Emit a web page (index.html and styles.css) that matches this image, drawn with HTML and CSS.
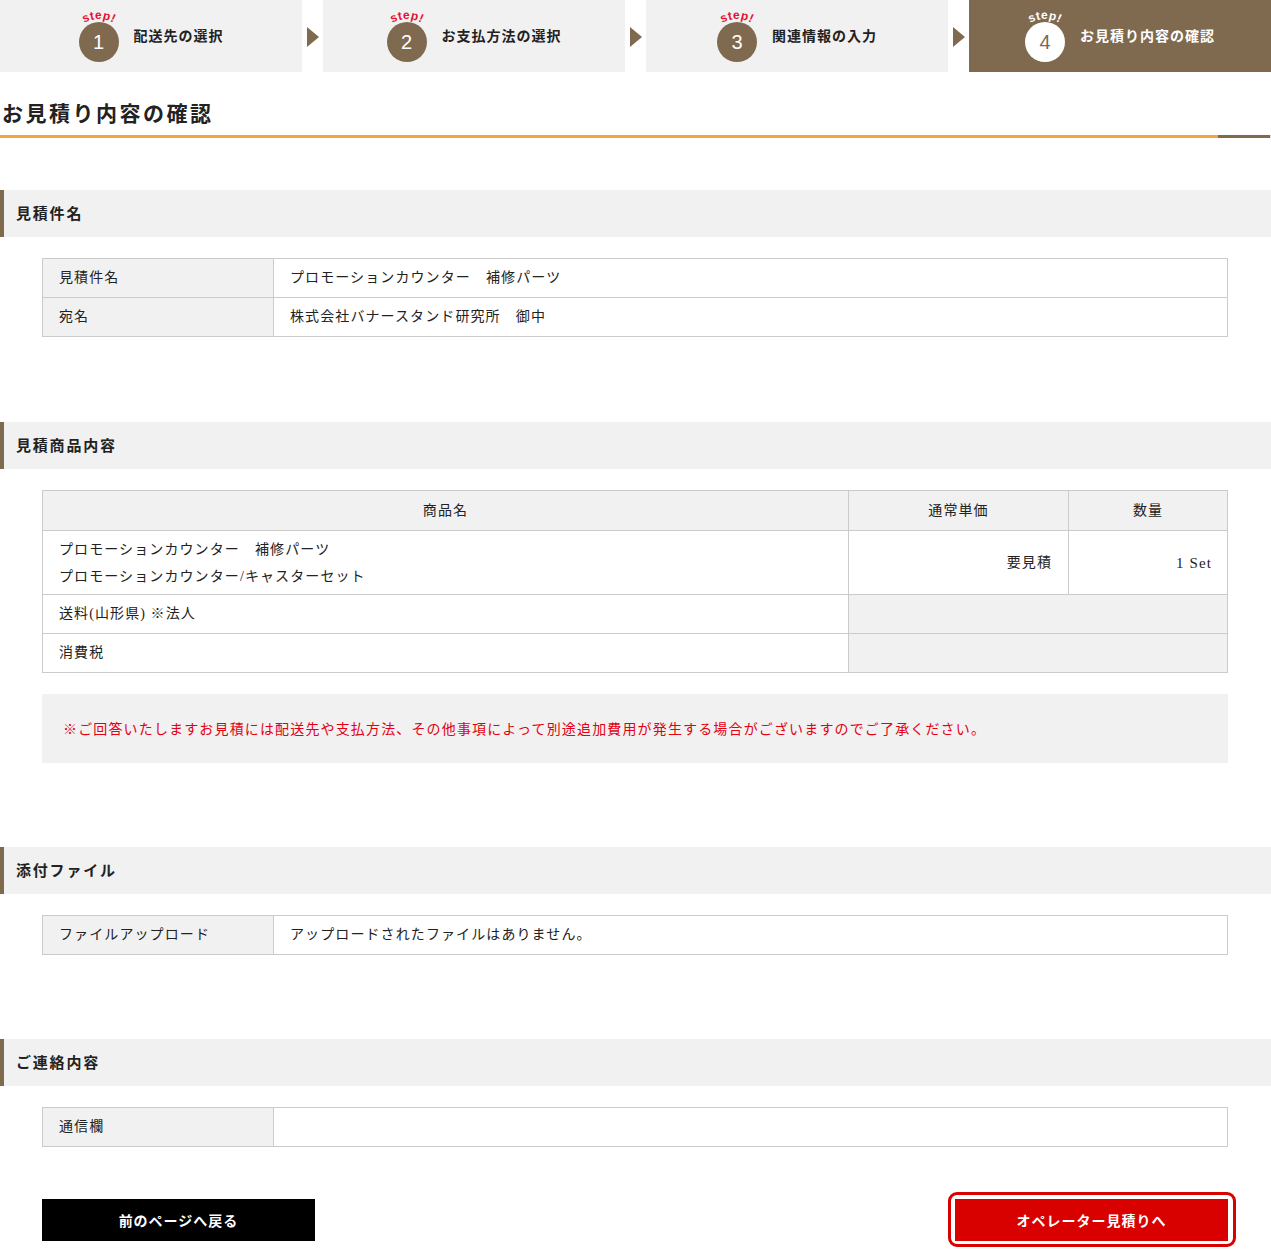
FILE: index.html
```html
<!DOCTYPE html>
<html lang="ja">
<head>
<meta charset="utf-8">
<title>お見積り内容の確認</title>
<link rel="stylesheet" href="styles.css">
</head>
<body>
<div class="steps">
  <div class="step">
    <div class="badge">
      <svg class="step-word" width="46" height="18" viewBox="0 0 46 18"><path id="arc1" d="M3,17 Q23,3 43,17" fill="none"/><text><textPath href="#arc1" startOffset="50%" text-anchor="middle">step!</textPath></text></svg>
      <div class="num">1</div>
    </div>
    <div class="step-label">配送先の選択</div>
  </div>
  <div class="arrow"><span></span></div>
  <div class="step">
    <div class="badge">
      <svg class="step-word" width="46" height="18" viewBox="0 0 46 18"><path id="arc2" d="M3,17 Q23,3 43,17" fill="none"/><text><textPath href="#arc2" startOffset="50%" text-anchor="middle">step!</textPath></text></svg>
      <div class="num">2</div>
    </div>
    <div class="step-label">お支払方法の選択</div>
  </div>
  <div class="arrow"><span></span></div>
  <div class="step">
    <div class="badge">
      <svg class="step-word" width="46" height="18" viewBox="0 0 46 18"><path id="arc3" d="M3,17 Q23,3 43,17" fill="none"/><text><textPath href="#arc3" startOffset="50%" text-anchor="middle">step!</textPath></text></svg>
      <div class="num">3</div>
    </div>
    <div class="step-label">関連情報の入力</div>
  </div>
  <div class="arrow"><span></span></div>
  <div class="step active">
    <div class="badge">
      <svg class="step-word" width="46" height="18" viewBox="0 0 46 18"><path id="arc4" d="M3,17 Q23,3 43,17" fill="none"/><text><textPath href="#arc4" startOffset="50%" text-anchor="middle">step!</textPath></text></svg>
      <div class="num">4</div>
    </div>
    <div class="step-label">お見積り内容の確認</div>
  </div>
</div>

<h1 class="page-title">お見積り内容の確認</h1>
<div class="title-line"></div>

<section class="section first">
  <h2 class="sec-head">見積件名</h2>
  <div class="sec-body">
    <table class="tbl">
      <colgroup><col class="col-label"><col></colgroup>
      <tr><th>見積件名</th><td>プロモーションカウンター　補修パーツ</td></tr>
      <tr><th>宛名</th><td>株式会社バナースタンド研究所　御中</td></tr>
    </table>
  </div>
</section>

<section class="section">
  <h2 class="sec-head">見積商品内容</h2>
  <div class="sec-body">
    <table class="tbl items">
      <colgroup><col class="col-name"><col class="col-price"><col class="col-qty"></colgroup>
      <tr class="head"><th>商品名</th><th>通常単価</th><th>数量</th></tr>
      <tr>
        <td class="multi">プロモーションカウンター　補修パーツ<br>プロモーションカウンター/キャスターセット</td>
        <td class="num-cell">要見積</td>
        <td class="num-cell qty">1 Set</td>
      </tr>
      <tr><td>送料(山形県) ※法人</td><td class="blank" colspan="2"></td></tr>
      <tr><td>消費税</td><td class="blank" colspan="2"></td></tr>
    </table>
    <div class="notice">※ご回答いたしますお見積には配送先や支払方法、その他事項によって別途追加費用が発生する場合がございますのでご了承ください。</div>
  </div>
</section>

<section class="section">
  <h2 class="sec-head">添付ファイル</h2>
  <div class="sec-body">
    <table class="tbl">
      <colgroup><col class="col-label"><col></colgroup>
      <tr><th>ファイルアップロード</th><td>アップロードされたファイルはありません。</td></tr>
    </table>
  </div>
</section>

<section class="section">
  <h2 class="sec-head">ご連絡内容</h2>
  <div class="sec-body">
    <table class="tbl">
      <colgroup><col class="col-label"><col></colgroup>
      <tr><th>通信欄</th><td></td></tr>
    </table>
  </div>
</section>

<div class="actions">
  <a class="btn btn-back" href="#">前のページへ戻る</a>
  <a class="btn btn-next" href="#">オペレーター見積りへ</a>
</div>
</body>
</html>
```

FILE: styles.css
```css
* { box-sizing: border-box; }
html, body { margin: 0; padding: 0; }
body {
  width: 1271px;
  font-family: "Noto Sans CJK JP", sans-serif;
  color: #222;
  background: #fff;
}

/* steps */
.steps {
  display: flex;
  height: 72px;
}
.step {
  flex: 0 0 302px;
  background: #f1f1f1;
  display: flex;
  align-items: center;
  justify-content: center;
  gap: 15px;
}
.step.active { background: #7f6a50; }
.badge {
  display: flex;
  flex-direction: column;
  align-items: center;
  width: 40px;
  margin-top: -1px;
}
.step-word {
  display: block;
  overflow: visible;
  margin-bottom: -5px;
}
.step-word text {
  font-family: "Liberation Sans", sans-serif;
  font-size: 12px;
  font-weight: bold;
  letter-spacing: 0.5px;
  fill: #e3132f;
}
.active .step-word text { fill: #fff; }
.num {
  width: 40px;
  height: 40px;
  border-radius: 50%;
  background: #7f6a50;
  color: #fff;
  font-family: "Liberation Sans", sans-serif;
  font-size: 20px;
  line-height: 40px;
  text-align: center;
}
.active .num { background: #fff; color: #7f6a50; }
.step-label {
  font-size: 14px;
  font-weight: bold;
  letter-spacing: 1px;
  line-height: 20px;
  margin-top: -2px;
}
.active .step-label { color: #fff; }
.arrow {
  flex: 1 1 auto;
  display: flex;
  align-items: center;
  justify-content: center;
  padding-top: 2px;
}
.arrow span {
  width: 0;
  height: 0;
  border-left: 12px solid #7f6a50;
  border-top: 10px solid transparent;
  border-bottom: 10px solid transparent;
}

/* title */
.page-title {
  margin: 25px 0 0;
  padding: 0 0 8px 2px;
  font-size: 21px;
  line-height: 30px;
  font-weight: bold;
  letter-spacing: 2.5px;
}
.title-line {
  height: 3px;
  background: linear-gradient(to right, #f5a83a 0, #f5a83a 1218px, #7f6a50 1218px, #7f6a50 1270px, #ddd 1270px);
}

/* sections */
.section { margin-top: 84px; }
.section.first { margin-top: 52px; }
.section.first .sec-body { padding-bottom: 1px; }
.sec-head {
  margin: 0;
  height: 47px;
  line-height: 46px;
  background: #f1f1f1;
  border-left: 4px solid #7f6a50;
  padding-left: 12px;
  font-size: 15px;
  font-weight: bold;
  letter-spacing: 1.8px;
}
.sec-body { padding: 21px 43px 0 42px; }

.tbl {
  width: 100%;
  border-collapse: collapse;
  table-layout: fixed;
  border: 1px solid #cbcbcb;
}
.tbl th, .tbl td {
  border: 1px solid #cbcbcb;
  padding: 6px 16px;
  font-family: "Liberation Serif", "Noto Sans CJK JP", serif;
  font-size: 14px;
  font-weight: normal;
  line-height: 26px;
  letter-spacing: 1.1px;
  text-align: left;
  vertical-align: middle;
  color: #222;
}
.tbl th { background: #f1f1f1; }
.col-label { width: 231px; }
.col-name { width: 806px; }
.col-price { width: 220px; }
.col-qty { width: 159px; }
.items .head th {
  text-align: center;
  padding-top: 7px;
  padding-bottom: 6px;
}
.items td.multi {
  line-height: 27px;
  padding-top: 5px;
  padding-bottom: 4px;
}
.items .num-cell { text-align: right; }
.items .qty { font-size: 15px; padding-right: 15px; }
.items .blank { background: #f1f1f1; }

.notice {
  margin-top: 21px;
  height: 69px;
  line-height: 68px;
  padding: 0 21px;
  background: #f1f1f1;
  color: #e50012;
  font-size: 14px;
  letter-spacing: 1.15px;
  white-space: nowrap;
}

/* buttons */
.actions {
  display: flex;
  justify-content: space-between;
  padding: 52px 43px 7px 42px;
}
.btn {
  display: block;
  width: 273px;
  height: 42px;
  line-height: 42px;
  text-align: center;
  color: #fff;
  text-decoration: none;
  font-size: 14px;
  font-weight: bold;
  letter-spacing: 1px;
}
.btn-back { background: #000; }
.btn-next {
  background: #d90000;
  position: relative;
}
.btn-next::before {
  content: "";
  position: absolute;
  top: -7px;
  left: -7px;
  right: -8px;
  bottom: -6px;
  border: 3px solid #d90000;
  border-radius: 9px;
}
```
